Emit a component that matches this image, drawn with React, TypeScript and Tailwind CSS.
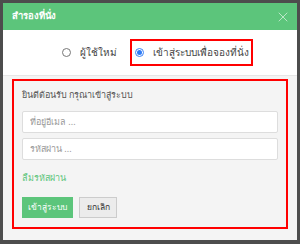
import { X } from 'lucide-react';

const font = { fontFamily: '"Noto Sans", "Liberation Sans", sans-serif' };

const Radio = ({ checked }: { checked?: boolean }) => (
  <span
    className={`flex h-[9px] w-[9px] items-center justify-center rounded-full border ${
      checked ? 'border-[#3b82f6]' : 'border-[#777]'
    } bg-white`}
  >
    {checked && <span className="h-[5px] w-[5px] rounded-full bg-[#2f7cf6]" />}
  </span>
);

export default function App() {
  return (
    <div className="h-[244px] w-[300px] bg-[#4d4d4d] px-[3px] pt-[3px]" style={font}>
      <div className="flex h-[237px] flex-col overflow-hidden bg-white">
        {/* header */}
        <div className="flex h-[27px] shrink-0 items-center justify-between bg-[#5cc57b] pl-[9px] pr-[6px]">
          <span className="text-[9.5px] font-semibold text-white">สำรองที่นั่ง</span>
          <X className="h-[16px] w-[16px] text-[#c8ecd3]" strokeWidth={1.3} />
        </div>

        {/* radio choices */}
        <div className="flex h-[45px] shrink-0 items-center pl-[59px]">
          <label className="flex items-center gap-[9px]">
            <Radio />
            <span className="text-[10px] text-[#444]">ผู้ใช้ใหม่</span>
          </label>
          <label className="ml-[13px] flex h-[27px] w-[123px] items-center gap-[9px] border-2 border-[#ff0000] pl-[3px]">
            <Radio checked />
            <span className="text-[10px] text-[#444]">เข้าสู่ระบบเพื่อจองที่นั่ง</span>
          </label>
        </div>

        {/* login form */}
        <div className="flex-1 border-t border-[#e6e6e6] bg-[#f4f4f4] px-[9px] pt-[3px]">
          <div className="flex h-[150px] flex-col border-2 border-[#ff0000] px-[8px]">
            <div className="mt-[7px] text-[9px] font-medium text-[#555]">ยินดีต้อนรับ กรุณาเข้าสู่ระบบ</div>
            <input
              className="mt-[9px] h-[22px] w-full rounded-[2px] border border-[#ddd] bg-white px-[7px] text-[9px] outline-none placeholder:text-[#999]"
              placeholder="ที่อยู่อีเมล ..."
              style={font}
            />
            <input
              className="mt-[5px] h-[22px] w-full rounded-[2px] border border-[#ddd] bg-white px-[7px] text-[9px] outline-none placeholder:text-[#999]"
              placeholder="รหัสผ่าน ..."
              style={font}
            />
            <a className="mt-[11px] text-[9px] text-[#5cc57b]">ลืมรหัสผ่าน</a>
            <div className="mt-[13px] flex gap-[6px]">
              <button className="h-[21px] w-[51px] bg-[#5cc57b] text-[8.5px] text-white" style={font}>
                เข้าสู่ระบบ
              </button>
              <button
                className="h-[21px] w-[38px] border border-[#ccc] bg-[#ececec] text-[8.5px] text-[#333]"
                style={font}
              >
                ยกเลิก
              </button>
            </div>
          </div>
        </div>
      </div>
    </div>
  );
}
